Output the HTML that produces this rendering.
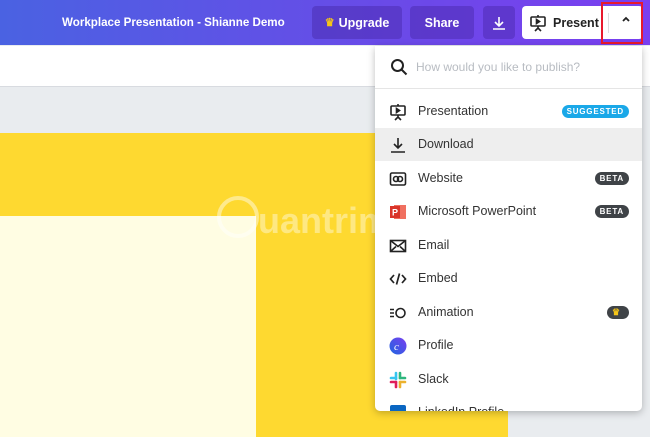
<!DOCTYPE html>
<html><head><style>
*{margin:0;padding:0;box-sizing:border-box}
body{width:650px;height:437px;overflow:hidden;position:relative;font-family:"Liberation Sans",sans-serif;background:#e9ecef}
.hdr{position:absolute;left:0;top:0;width:650px;height:45px;background:linear-gradient(90deg,#4a62e2,#6a4ae8 60%,#7a3ff0)}
.title{position:absolute;left:62px;top:16px;color:#fff;font-weight:bold;font-size:11.6px}
.btn{position:absolute;top:6px;height:33px;border-radius:4px;background:rgba(60,30,150,.35);color:#fff;font-weight:bold;font-size:12.5px;display:flex;align-items:center;justify-content:center}
.bar{position:absolute;left:0;top:46px;width:650px;height:41px;background:#fff;border-bottom:1px solid #d8dbe0}
.dd{position:absolute;left:375px;top:46px;width:267px;height:365px;background:#fff;border-radius:0 0 5px 5px;box-shadow:0 2px 8px rgba(0,0,0,.25);overflow:hidden}
.row{position:absolute;left:0;width:267px;height:33px;display:flex;align-items:center;font-size:12.5px;color:#333}
.row .ic{position:absolute;left:14px;top:8px;width:18px;height:18px}
.row .t{position:absolute;left:43px;top:9px}
.badge{position:absolute;right:13px;top:10px;height:13px;border-radius:7px;background:#3f4347;color:#fff;font-size:8px;font-weight:bold;letter-spacing:.8px;padding:0 5px;line-height:13px}
</style></head><body>
<div class="hdr">
<div class="title">Workplace Presentation - Shianne Demo</div>
<div class="btn" style="left:312px;width:90px"><span style="color:#f5c518;font-size:11px;margin-right:4px">♛</span>Upgrade</div>
<div class="btn" style="left:410px;width:64px">Share</div>
<div class="btn" style="left:483px;width:32px"><svg width="16" height="16" viewBox="0 0 16 16" fill="none" stroke="#fff" stroke-width="1.6"><path d="M8 2v9M4 7l4 4 4-4M2 14h12"/></svg></div>
<div class="btn" style="left:522px;width:121px;background:#fff;color:#222;justify-content:flex-start;padding-left:7px"><svg width="18" height="18" viewBox="0 0 18 18" fill="none" stroke="#222" stroke-width="1.6"><rect x="2" y="3" width="14" height="9" rx="1"/><path d="M7.5 5.5v4l3-2z" fill="#222"/><path d="M9 12v2M6 17l3-3 3 3M9 1v2"/></svg><span style="margin-left:6px">Present</span><span style="position:absolute;left:86px;top:7px;width:1px;height:20px;background:#ddd"></span><span style="position:absolute;left:98px;top:7px"><svg width="12" height="12" viewBox="0 0 12 12" fill="none" stroke="#222" stroke-width="1.8"><path d="M3 8l3-3 3 3"/></svg></span></div>
<div style="position:absolute;left:601px;top:2px;width:42px;height:42px;border:2px solid #e8192c"></div>
</div>
<div class="bar"></div>
<div style="position:absolute;left:0;top:133px;width:508px;height:304px;background:#fed930"></div>
<div style="position:absolute;left:0;top:216px;width:256px;height:221px;background:#fffde3"></div>
<div style="position:absolute;left:217px;top:196px;width:42px;height:42px;border-radius:50%;border:4px solid rgba(255,255,255,.45)"></div>
<div style="position:absolute;left:258px;top:200px;font-size:36px;font-weight:bold;color:rgba(255,255,255,.4)">uantrim</div>
<div class="dd">
<svg style="position:absolute;left:15px;top:12px" width="18" height="18" viewBox="0 0 18 18" fill="none" stroke="#222" stroke-width="2"><circle cx="7.5" cy="7.5" r="5.5"/><path d="M11.5 11.5l5 5"/></svg>
<div style="position:absolute;left:41px;top:14px;font-size:12px;color:#b8bcc2">How would you like to publish?</div>
<div style="position:absolute;left:0;top:42px;width:267px;height:1px;background:#e5e5e5"></div>
<div class="row" style="top:49px"><svg class="ic" viewBox="0 0 18 18" fill="none" stroke="#222" stroke-width="1.6"><rect x="2" y="3" width="14" height="9" rx="1"/><path d="M7.5 5.5v4l3-2z" fill="#222"/><path d="M9 12v2M6 17l3-3 3 3M9 1v2"/></svg><span class="t">Presentation</span><span class="badge" style="background:#1aa8e8">SUGGESTED</span></div>
<div class="row" style="top:82px;background:#eeeeee"><svg class="ic" viewBox="0 0 18 18" fill="none" stroke="#222" stroke-width="1.6"><path d="M9 2v10M5 8l4 4 4-4M2 16h14"/></svg><span class="t">Download</span></div>
<div class="row" style="top:116px"><svg class="ic" viewBox="0 0 18 18" fill="none" stroke="#222" stroke-width="1.6"><rect x="1.5" y="3" width="15" height="12" rx="1.5"/><circle cx="7" cy="9" r="2.5"/><circle cx="11" cy="9" r="2.5"/></svg><span class="t">Website</span><span class="badge">BETA</span></div>
<div class="row" style="top:149px"><svg class="ic" viewBox="0 0 18 18"><rect x="5" y="2" width="12" height="14" fill="#f07060"/><rect x="1" y="3" width="10" height="12" fill="#d9352a"/><text x="3" y="12.5" font-size="9" fill="#fff" font-family="Liberation Sans" font-weight="bold">P</text></svg><span class="t">Microsoft PowerPoint</span><span class="badge">BETA</span></div>
<div class="row" style="top:183px"><svg class="ic" viewBox="0 0 18 18" fill="none" stroke="#222" stroke-width="1.6"><rect x="1.5" y="3.5" width="15" height="11"/><path d="M1.5 3.5l7.5 6 7.5-6M1.5 14.5l5.5-5M16.5 14.5l-5.5-5"/></svg><span class="t">Email</span></div>
<div class="row" style="top:216px"><svg class="ic" viewBox="0 0 18 18" fill="none" stroke="#222" stroke-width="1.7"><path d="M5 5L1.5 9 5 13M13 5l3.5 4L13 13M10.5 3.5l-3 11"/></svg><span class="t">Embed</span></div>
<div class="row" style="top:250px"><svg class="ic" viewBox="0 0 18 18" fill="none" stroke="#222" stroke-width="1.6"><circle cx="11.5" cy="9" r="4.5"/><path d="M1 5.5h4M1 9h4M1 12.5h4"/></svg><span class="t">Animation</span><span class="badge" style="width:22px;color:#f5c518;font-size:9px;padding:0 5px">♛</span></div>
<div class="row" style="top:283px"><svg class="ic" viewBox="0 0 18 18"><defs><linearGradient id="g" x1="0" y1="1" x2="1" y2="0"><stop offset="0" stop-color="#1e66e0"/><stop offset="1" stop-color="#7a3ff0"/></linearGradient></defs><circle cx="9" cy="9" r="8.5" fill="url(#g)"/><text x="5" y="13" font-size="11" fill="#fff" font-style="italic" font-family="Liberation Serif">c</text></svg><span class="t">Profile</span></div>
<div class="row" style="top:317px"><svg class="ic" viewBox="0 0 18 18" stroke-width="2.6" stroke-linecap="round"><path d="M7 2v6" stroke="#36c5f0"/><path d="M2 7h5" stroke="#36c5f0"/><path d="M11 2v5" stroke="#2eb67d"/><path d="M11 7h5" stroke="#2eb67d"/><path d="M11 11v5" stroke="#ecb22e"/><path d="M11 11h5" stroke="#ecb22e"/><path d="M7 11v5" stroke="#e01e5a"/><path d="M2 11h5" stroke="#e01e5a"/></svg><span class="t">Slack</span></div>
<div class="row" style="top:350px"><svg class="ic" viewBox="0 0 18 18"><rect x="1" y="1" width="16" height="16" rx="2" fill="#0a66c2"/></svg><span class="t">LinkedIn Profile</span></div>
</div>
</body></html>
